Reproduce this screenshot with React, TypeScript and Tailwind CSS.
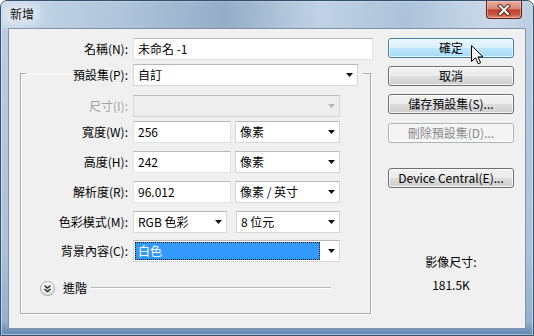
import React from "react";

const Arrow = ({ disabled = false }: { disabled?: boolean }) => (
  <svg width="7" height="4" viewBox="0 0 7 4" className="shrink-0">
    <path d="M0 0H7L3.5 4Z" fill={disabled ? "#b4b4b4" : "#111"} />
  </svg>
);

function Select({
  cls,
  text,
  disabled = false,
  highlight = false,
}: {
  cls: string;
  text?: string;
  disabled?: boolean;
  highlight?: boolean;
}) {
  return (
    <div
      className={`flex items-center h-[22px] border border-[#d3d6db] border-t-[#b5b8bd] pr-[4px] ${
        disabled ? "bg-[#eeeeee]" : "bg-white"
      } ${cls}`}
    >
      {highlight ? (
        <div className="flex-1 h-[18px] ml-[1px] mr-[8px] bg-[#3399ff] border border-dotted border-[#1a1a1a] flex items-center pl-[2px] text-white">
          {text}
        </div>
      ) : (
        <div className="flex-1 pl-[4px] whitespace-nowrap">{text}</div>
      )}
      <Arrow disabled={disabled} />
    </div>
  );
}

function Input({ cls, value }: { cls: string; value: string }) {
  return (
    <div
      className={`flex items-center h-[22px] bg-white border border-[#dfe2e6] border-t-[#b5b8bd] pl-[4px] ${cls}`}
    >
      {value}
    </div>
  );
}

function Label({ cls, text, disabled = false }: { cls: string; text: string; disabled?: boolean }) {
  return (
    <div className={`text-right shrink-0 ${disabled ? "text-[#a3a3a3]" : "text-black"} ${cls}`}>{text}</div>
  );
}

function Button({
  text,
  variant = "normal",
  cls = "",
}: {
  text: string;
  variant?: "normal" | "hot" | "disabled";
  cls?: string;
}) {
  const v =
    variant === "hot"
      ? "border-[#3c7fb1] bg-[linear-gradient(#eaf6fd_0%,#d9f0fc_50%,#bee6fd_50%,#a7d9f5_100%)] text-black"
      : variant === "disabled"
      ? "border-[#adb2b5] bg-[#f4f4f4] text-[#8a8a8a]"
      : "border-[#707070] bg-[linear-gradient(#f2f2f2_0%,#ebebeb_50%,#dddddd_50%,#cfcfcf_100%)] text-black";
  return (
    <div
      className={`h-[20px] w-full rounded-[3px] border flex items-center justify-center shadow-[inset_0_0_0_1px_rgba(255,255,255,0.75)] ${v} ${cls}`}
    >
      {text}
    </div>
  );
}

export default function App() {
  return (
    <div className="w-[534px] h-[336px] relative overflow-hidden rounded-t-[7px] border border-[#34506f] bg-[linear-gradient(180deg,#bccfe3_0%,#aac1d9_75%,#93b0cf_96%,#5f86b3_100%)] flex flex-col text-[12px] leading-[16px] font-['Noto_Sans_CJK_TC','Noto_Sans',sans-serif] text-black shadow-[inset_0_0_0_1px_rgba(255,255,255,0.45)]">
      {/* title bar */}
      <div className="h-[27px] shrink-0 flex items-start bg-[linear-gradient(90deg,rgba(205,220,235,0.7)_0%,rgba(160,184,208,0.4)_22%,rgba(110,140,172,0.5)_42%,rgba(196,213,230,0.6)_60%,rgba(150,176,204,0.4)_76%,rgba(210,223,236,0.65)_92%,rgba(190,206,223,0.5)_100%)]">
        <div className="ml-[9px] mt-[5px] relative">
          <div className="absolute -inset-x-[6px] -inset-y-[2px] rounded-[6px] bg-white/45 blur-[4px]" />
          <span className="relative text-[#111]">新增</span>
        </div>
        <div className="ml-auto mr-[11px] w-[36px] h-[18px] rounded-b-[4px] border border-t-0 border-[#5a2219] bg-[linear-gradient(180deg,#e8ab9f_0%,#d98a7a_45%,#c0432b_52%,#c9563e_80%,#e09078_100%)] shadow-[inset_0_0_0_1px_rgba(255,210,200,0.5)] flex items-center justify-center">
          <svg width="14" height="12" viewBox="0 0 14 12">
            <path d="M3 2L11 10M11 2L3 10" stroke="#5b2a22" strokeWidth="4" strokeLinecap="square" />
            <path d="M3 2L11 10M11 2L3 10" stroke="#ffffff" strokeWidth="2" strokeLinecap="square" />
          </svg>
        </div>
      </div>

      {/* client area */}
      <div className="mx-[7px] mb-[6px] flex-1 border border-[#7f93aa] bg-[#f0f0f0] flex">
        {/* left column */}
        <div className="pl-[11px] pt-[9px] flex flex-col">
          <div className="flex items-center h-[22px]">
            <Label cls="w-[108px]" text="名稱(N):" />
            <Input cls="ml-[5px] w-[240px]" value="未命名 -1" />
          </div>

          <fieldset className="w-[351px] h-[254px] border border-[#a9a9a9] shadow-[1px_1px_0_#ffffff,inset_1px_1px_0_#ffffff] flex flex-col">
            <legend className="ml-[5px] pt-[4px] pr-[5px]">
              <div className="flex items-center h-[22px]">
                <Label cls="w-[102px]" text="預設集(P):" />
                <Select cls="ml-[5px] w-[225px]" text="自訂" />
              </div>
            </legend>

            <div className="flex items-center h-[22px] mt-[9px]">
              <Label cls="w-[107px]" text="尺寸(I):" disabled />
              <Select cls="ml-[5px] w-[207px]" disabled />
            </div>

            <div className="flex items-center h-[22px] mt-[4px]">
              <Label cls="w-[107px]" text="寬度(W):" />
              <Input cls="ml-[5px] w-[98px]" value="256" />
              <Select cls="ml-[4px] w-[105px]" text="像素" />
            </div>

            <div className="flex items-center h-[22px] mt-[8px]">
              <Label cls="w-[107px]" text="高度(H):" />
              <Input cls="ml-[5px] w-[98px]" value="242" />
              <Select cls="ml-[4px] w-[105px]" text="像素" />
            </div>

            <div className="flex items-center h-[22px] mt-[8px]">
              <Label cls="w-[107px]" text="解析度(R):" />
              <Input cls="ml-[5px] w-[98px]" value="96.012" />
              <Select cls="ml-[4px] w-[105px]" text="像素 / 英寸" />
            </div>

            <div className="flex items-center h-[22px] mt-[8px]">
              <Label cls="w-[107px]" text="色彩模式(M):" />
              <Select cls="ml-[5px] w-[94px]" text="RGB 色彩" />
              <Select cls="ml-[9px] w-[104px]" text="8 位元" />
            </div>

            <div className="flex items-center h-[22px] mt-[7px]">
              <Label cls="w-[107px]" text="背景內容(C):" />
              <Select cls="ml-[5px] w-[207px]" text="白色" highlight />
            </div>

            <div className="flex items-center h-[16px] mt-[18px] pr-[39px]">
              <div className="ml-[19px] w-[15px] h-[15px] rounded-full border border-[#a3a3a3] bg-[linear-gradient(180deg,#ffffff_0%,#f2f2f2_50%,#dedede_100%)] flex items-center justify-center">
                <svg width="9" height="9" viewBox="0 0 9 9">
                  <path d="M1.5 1.5L4.5 4L7.5 1.5M1.5 5L4.5 7.5L7.5 5" stroke="#222" strokeWidth="1.4" fill="none" />
                </svg>
              </div>
              <span className="ml-[8px]">進階</span>
              <div className="ml-[4px] flex-1 h-[2px] border-t border-[#b9b9b9] border-b border-b-white" />
            </div>
          </fieldset>
        </div>

        {/* right column */}
        <div className="ml-auto mr-[11px] pt-[9px] w-[126px] flex flex-col items-center">
          <Button text="確定" variant="hot" />
          <Button text="取消" cls="mt-[8px]" />
          <Button text="儲存預設集(S)..." cls="mt-[8px]" />
          <Button text="刪除預設集(D)..." variant="disabled" cls="mt-[9px]" />
          <Button text="Device Central(E)..." cls="mt-[25px]" />
          <div className="mt-[66px]">影像尺寸:</div>
          <div className="mt-[7px]">181.5K</div>
        </div>
      </div>

      {/* mouse cursor */}
      <svg className="absolute left-[470px] top-[44px]" width="13" height="20" viewBox="0 0 13 20">
        <path
          d="M0.5 0.5L0.5 16.5L4.5 12.8L7.2 18.8L9.6 17.8L7 11.9L12 11.9Z"
          fill="#ffffff"
          stroke="#000000"
          strokeWidth="1"
          strokeLinejoin="miter"
        />
      </svg>
    </div>
  );
}
